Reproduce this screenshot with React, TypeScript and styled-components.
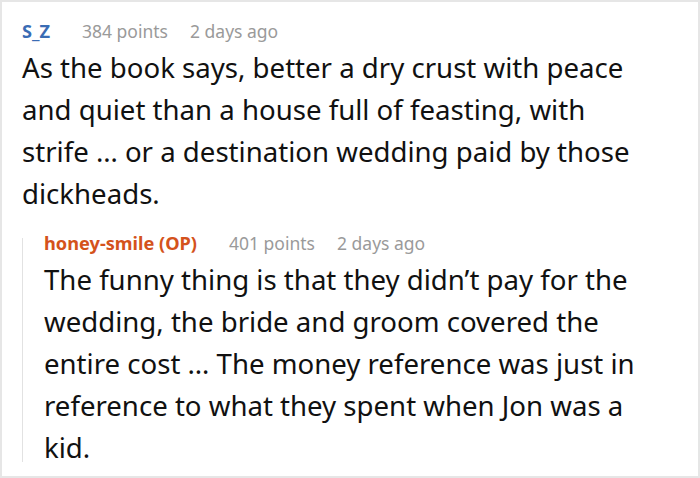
import styled, { createGlobalStyle } from "styled-components";

const GlobalStyle = createGlobalStyle`
  html, body {
    margin: 0;
    padding: 0;
    background: #ffffff;
  }
  * {
    box-sizing: border-box;
  }
`;

const Thread = styled.div`
  width: 700px;
  height: 478px;
  border: 2px solid #e6e6e6;
  padding: 14px 42px 0 20px;
  font-family: "Noto Sans", "Open Sans", sans-serif;
  background: #ffffff;
  overflow: hidden;
`;

const Comment = styled.div`
  display: flex;
  flex-direction: column;
`;

const Reply = styled.div`
  position: relative;
  margin-top: 14px;
  padding-left: 22px;

  &::before {
    content: "";
    position: absolute;
    left: 0;
    top: 10px;
    bottom: 6px;
    width: 1px;
    background: #e2e2e2;
  }
`;

const Meta = styled.div`
  display: flex;
  align-items: center;
  height: 30px;
  font-size: 17.5px;
  white-space: nowrap;
`;

const Author = styled.span<{ $op?: boolean }>`
  margin-right: 32px;
  font-size: 18.2px;
  font-weight: 700;
  color: ${({ $op }) => ($op ? "#d4521c" : "#3a6cb4")};
`;

const Stat = styled.span`
  margin-right: 22px;
  color: #9a9a9a;
`;

const Body = styled.p`
  margin: 0;
  font-size: 27.6px;
  line-height: 42px;
  color: #111111;
`;

type Entry = {
  author: string;
  op?: boolean;
  points: number;
  age: string;
  text: string;
};

const root: Entry = {
  author: "S_Z",
  points: 384,
  age: "2 days ago",
  text: "As the book says, better a dry crust with peace and quiet than a house full of feasting, with strife … or a destination wedding paid by those dickheads.",
};

const reply: Entry = {
  author: "honey-smile (OP)",
  op: true,
  points: 401,
  age: "2 days ago",
  text: "The funny thing is that they didn’t pay for the wedding, the bride and groom covered the entire cost … The money reference was just in reference to what they spent when Jon was a kid.",
};

const CommentHead: React.FC<{ entry: Entry }> = ({ entry }) => (
  <Meta>
    <Author $op={entry.op}>{entry.author}</Author>
    <Stat>{entry.points} points</Stat>
    <Stat>{entry.age}</Stat>
  </Meta>
);

const App = () => (
  <>
    <GlobalStyle />
    <Thread>
      <Comment>
        <CommentHead entry={root} />
        <Body>{root.text}</Body>
        <Reply>
          <CommentHead entry={reply} />
          <Body>{reply.text}</Body>
        </Reply>
      </Comment>
    </Thread>
  </>
);

export default App;
